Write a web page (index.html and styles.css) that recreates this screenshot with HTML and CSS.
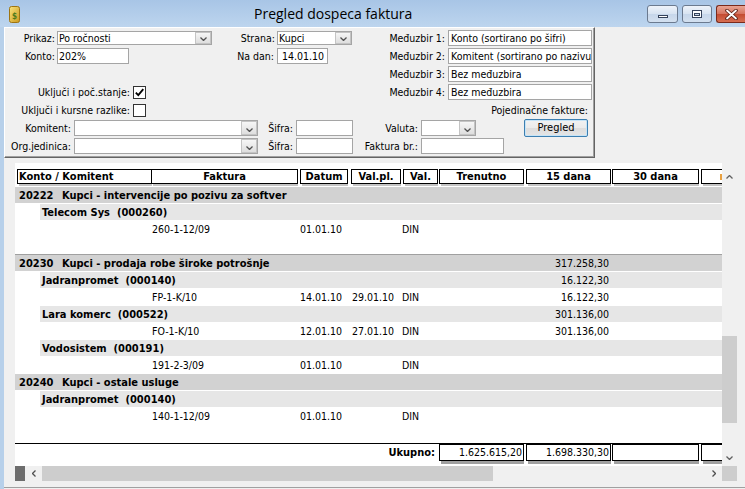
FILE: index.html
```html
<!DOCTYPE html>
<html lang="sr">
<head>
<meta charset="utf-8">
<title>Pregled dospeca faktura</title>
<link rel="stylesheet" href="styles.css">
</head>
<body>
<div class="window">
  <header class="titlebar">
    <svg class="app-icon" width="11" height="17" viewBox="0 0 11 17">
      <defs>
        <linearGradient id="gold" x1="0" y1="0" x2="1" y2="1">
          <stop offset="0" stop-color="#fbe57e"/>
          <stop offset="1" stop-color="#c9981e"/>
        </linearGradient>
      </defs>
      <rect x="0.5" y="0.5" width="10" height="16" rx="2" fill="url(#gold)" stroke="#9e7512"/>
      <text x="5.5" y="13" font-size="8" font-family="DejaVu Sans" font-weight="bold" fill="#4e7c1c" text-anchor="middle">$</text>
    </svg>
    <div class="title">Pregled dospeca faktura</div>
    <div class="caption">
      <div class="cbtn cbtn-min">
        <svg width="12" height="5" viewBox="0 0 12 5"><rect x="1.5" y="1.5" width="9" height="2" fill="#fff" stroke="#34425a"/></svg>
      </div>
      <div class="cbtn cbtn-max">
        <svg width="12" height="10" viewBox="0 0 12 10"><rect x="1.5" y="1.5" width="9" height="7" fill="#fff" stroke="#34425a"/><rect x="3.5" y="4.5" width="5" height="2" fill="#c9d8ea" stroke="#34425a"/></svg>
      </div>
      <div class="cbtn cbtn-close">
        <svg width="13" height="11" viewBox="0 0 13 11"><path d="M2 1.5 L11 9.5 M11 1.5 L2 9.5" stroke="#5a2015" stroke-width="3.6" stroke-linecap="round"/><path d="M2 1.5 L11 9.5 M11 1.5 L2 9.5" stroke="#fff" stroke-width="1.8" stroke-linecap="round"/></svg>
      </div>
    </div>
  </header>

  <div class="client">
    <div class="filters">
      <div class="frow first">
        <span class="lbl w50">Prikaz:</span>
        <div class="combo sm ml2 cw155"><span class="val">Po ročnosti</span><span class="drop"><svg width="7" height="4" viewBox="0 0 7 4"><path d="M0.5 0.5 L3.5 3.5 L6.5 0.5" fill="none" stroke="#505050" stroke-width="1.3"/></svg></span></div>
        <span class="lbl w63">Strana:</span>
        <div class="combo sm ml2 cw75"><span class="val">Kupci</span><span class="drop"><svg width="7" height="4" viewBox="0 0 7 4"><path d="M0.5 0.5 L3.5 3.5 L6.5 0.5" fill="none" stroke="#505050" stroke-width="1.3"/></svg></span></div>
        <div class="rgrp"><span class="lbl w93">Međuzbir 1:</span><div class="edit ml3 ew144">Konto (sortirano po šifri)</div></div>
      </div>
      <div class="frow">
        <span class="lbl w50">Konto:</span>
        <div class="edit ml2 ew72">202%</div>
        <span class="lbl w145">Na dan:</span>
        <div class="edit ml3 ew51">14.01.10</div>
        <div class="rgrp"><span class="lbl w93">Međuzbir 2:</span><div class="edit ml3 ew144">Komitent (sortirano po nazivu</div></div>
      </div>
      <div class="frow">
        <div class="rgrp"><span class="lbl w93">Međuzbir 3:</span><div class="edit ml3 ew144">Bez međuzbira</div></div>
      </div>
      <div class="frow">
        <span class="lbl w125">Uključi i poč.stanje:</span>
        <span class="chk"><svg width="11" height="11" viewBox="0 0 11 11"><path d="M1.8 5.6 L4.3 8.2 L9.3 2.2" fill="none" stroke="#000" stroke-width="1.8"/></svg></span>
        <div class="rgrp"><span class="lbl w93">Međuzbir 4:</span><div class="edit ml3 ew144">Bez međuzbira</div></div>
      </div>
      <div class="frow">
        <span class="lbl w125">Uključi i kursne razlike:</span>
        <span class="chk"></span>
        <span class="note">Pojedinačne fakture:</span>
      </div>
      <div class="frow">
        <span class="lbl w66">Komitent:</span>
        <div class="combo ml3 cw184"><span class="val"></span><span class="drop"><svg width="7" height="4" viewBox="0 0 7 4"><path d="M0.5 0.5 L3.5 3.5 L6.5 0.5" fill="none" stroke="#505050" stroke-width="1.3"/></svg></span></div>
        <span class="lbl w35">Šifra:</span>
        <div class="edit ml3 ew57"></div>
        <span class="lbl w65">Valuta:</span>
        <div class="combo ml3 cw55"><span class="val"></span><span class="drop"><svg width="7" height="4" viewBox="0 0 7 4"><path d="M0.5 0.5 L3.5 3.5 L6.5 0.5" fill="none" stroke="#505050" stroke-width="1.3"/></svg></span></div>
        <span class="btn">Pregled</span>
      </div>
      <div class="frow">
        <span class="lbl w66">Org.jedinica:</span>
        <div class="combo ml3 cw184"><span class="val"></span><span class="drop"><svg width="7" height="4" viewBox="0 0 7 4"><path d="M0.5 0.5 L3.5 3.5 L6.5 0.5" fill="none" stroke="#505050" stroke-width="1.3"/></svg></span></div>
        <span class="lbl w35">Šifra:</span>
        <div class="edit ml3 ew57"></div>
        <span class="lbl w65">Faktura br.:</span>
        <div class="edit ml3 ew83"></div>
      </div>
    </div>

    <div class="grid-wrap">
      <div class="tview">
        <div class="thead">
          <div class="hc h1">Konto / Komitent</div>
          <div class="hc h2">Faktura</div>
          <div class="hc h3">Datum</div>
          <div class="hc h4">Val.pl.</div>
          <div class="hc h5">Val.</div>
          <div class="hc h6">Trenutno</div>
          <div class="hc h7">15 dana</div>
          <div class="hc h8">30 dana</div>
          <div class="hc h9"><span class="clip-mark"></span></div>
        </div>
        <div class="tbody">
          <div class="grp"><span class="code">20222</span><span class="name">Kupci - intervencije po pozivu za softver</span><span class="amt"></span></div>
          <div class="sub"><span class="name">Telecom Sys&nbsp; (000260)</span><span class="amt"></span></div>
          <div class="det"><span class="d-fak">260-1-12/09</span><span class="d-dat">01.01.10</span><span class="d-vp"></span><span class="d-val">DIN</span><span class="d-tr"></span><span class="d-15"></span></div>
          <div class="blank"></div>
          <div class="grp sep"><span class="code">20230</span><span class="name">Kupci - prodaja robe široke potrošnje</span><span class="amt">317.258,30</span></div>
          <div class="sub"><span class="name">Jadranpromet&nbsp; (000140)</span><span class="amt">16.122,30</span></div>
          <div class="det"><span class="d-fak">FP-1-K/10</span><span class="d-dat">14.01.10</span><span class="d-vp">29.01.10</span><span class="d-val">DIN</span><span class="d-tr"></span><span class="d-15">16.122,30</span></div>
          <div class="sub"><span class="name">Lara komerc&nbsp; (000522)</span><span class="amt">301.136,00</span></div>
          <div class="det"><span class="d-fak">FO-1-K/10</span><span class="d-dat">12.01.10</span><span class="d-vp">27.01.10</span><span class="d-val">DIN</span><span class="d-tr"></span><span class="d-15">301.136,00</span></div>
          <div class="sub"><span class="name">Vodosistem&nbsp; (000191)</span><span class="amt"></span></div>
          <div class="det"><span class="d-fak">191-2-3/09</span><span class="d-dat">01.01.10</span><span class="d-vp"></span><span class="d-val">DIN</span><span class="d-tr"></span><span class="d-15"></span></div>
          <div class="grp"><span class="code">20240</span><span class="name">Kupci - ostale usluge</span><span class="amt"></span></div>
          <div class="sub"><span class="name">Jadranpromet&nbsp; (000140)</span><span class="amt"></span></div>
          <div class="det"><span class="d-fak">140-1-12/09</span><span class="d-dat">01.01.10</span><span class="d-vp"></span><span class="d-val">DIN</span><span class="d-tr"></span><span class="d-15"></span></div>
        </div>
        <div class="tfoot">
          <span class="ukupno">Ukupno:</span>
          <div class="fc f1">1.625.615,20</div>
          <div class="fc f2">1.698.330,30</div>
          <div class="fc f3"></div>
          <div class="fc f4"></div>
        </div>
      </div>

      <div class="vscroll">
        <div class="sb-btn up"><svg width="7" height="4" viewBox="0 0 7 4"><path d="M0.5 3.5 L3.5 0.5 L6.5 3.5" fill="none" stroke="#606060" stroke-width="1.3"/></svg></div>
        <div class="vtrack"><div class="vthumb"></div></div>
        <div class="sb-btn down"><svg width="7" height="4" viewBox="0 0 7 4"><path d="M0.5 0.5 L3.5 3.5 L6.5 0.5" fill="none" stroke="#606060" stroke-width="1.3"/></svg></div>
      </div>

      <div class="hscroll">
        <div class="hdark"></div>
        <div class="hbtn"><svg width="4" height="7" viewBox="0 0 4 7"><path d="M3.5 0.5 L0.5 3.5 L3.5 6.5" fill="none" stroke="#505050" stroke-width="1.3"/></svg></div>
        <div class="hthumb"></div>
        <div class="htrack"></div>
        <div class="hbtn"><svg width="4" height="7" viewBox="0 0 4 7"><path d="M0.5 0.5 L3.5 3.5 L0.5 6.5" fill="none" stroke="#505050" stroke-width="1.3"/></svg></div>
      </div>

      <div class="corner"></div>
    </div>

    <div class="bottom-edge"></div>
  </div>
</div>
</body>
</html>
```

FILE: styles.css
```css
* { box-sizing: border-box; }
html, body { margin: 0; padding: 0; }
body {
  width: 745px;
  height: 489px;
  overflow: hidden;
  background: #f0f0f0;
  font-family: "DejaVu Sans Condensed", "DejaVu Sans", "Liberation Sans", sans-serif;
  font-stretch: condensed;
  font-size: 10.5px;
  color: #000;
}
.window { width: 745px; height: 489px; display: flex; flex-direction: column; }

/* Title bar */
.titlebar {
  flex: none;
  height: 27px;
  display: flex;
  align-items: flex-start;
  overflow: hidden;
  background: linear-gradient(#a8c5e6, #bdd5ee);
}
.app-icon { flex: none; margin: 6px 0 0 9px; }
.title {
  flex: none;
  margin: 4px 0 0 234px;
  font-family: "Open Sans", "Noto Sans", sans-serif;
  font-stretch: normal;
  font-size: 14px;
  line-height: 19px;
}
.caption { flex: none; margin-left: auto; margin-top: 5px; display: flex; gap: 4px; }
.cbtn {
  height: 18px;
  border: 1px solid #6b7a8f;
  border-radius: 3px;
  background: linear-gradient(#eef3fa, #d7e3f1 50%, #c6d6ea 51%, #d3e0ef);
  display: flex;
  align-items: center;
  justify-content: center;
}
.cbtn-min { width: 31px; }
.cbtn-min svg { margin-top: 5px; }
.cbtn-max { width: 30px; }
.cbtn-close {
  width: 29px;
  border-right: none;
  border-radius: 3px 0 0 3px;
  border-color: #7a2a1c;
  background: linear-gradient(#e8a595, #d5725d 50%, #c44b31 51%, #d66e52);
}

/* Client */
.client { flex: 1; display: flex; flex-direction: column; border-left: 4px solid #b7d0ea; }

.filters {
  flex: none;
  width: 591px;
  height: 131px;
  border: 1px solid;
  border-color: #ffffff #646464 #646464 #ffffff;
  box-shadow: inset -1px -1px 0 #a0a0a0;
  padding: 1px 2px 0 0;
  display: flex;
  flex-direction: column;
  gap: 2px;
}
.frow { flex: none; display: flex; align-items: center; height: 16px; }
.frow.first { height: 17px; }
.lbl { flex: none; text-align: right; white-space: nowrap; line-height: 16px; }
.w35 { width: 35px; }
.w50 { width: 50px; }
.w63 { width: 63px; }
.w65 { width: 65px; }
.w66 { width: 66px; }
.w93 { width: 93px; }
.w125 { width: 125px; }
.w145 { width: 145px; }
.ml2 { margin-left: 2px; }
.ml3 { margin-left: 3px; }

.rgrp { margin-left: auto; display: flex; align-items: center; }

.edit {
  flex: none;
  height: 16px;
  border: 1px solid #a5a5a5;
  background: #fff;
  padding-left: 2px;
  line-height: 14px;
  white-space: nowrap;
  overflow: hidden;
}
.ew51 { width: 51px; padding-left: 4px; }
.ew57 { width: 57px; }
.ew72 { width: 72px; padding-left: 1px; }
.ew83 { width: 83px; }
.ew144 { width: 144px; }

.combo {
  flex: none;
  display: flex;
  height: 16px;
  border: 1px solid #a5a5a5;
  background: #fff;
}
.combo.sm { height: 14px; }
.combo .val { flex: 1; padding-left: 1px; line-height: 14px; white-space: nowrap; overflow: hidden; }
.combo.sm .val { line-height: 12px; }
.combo .drop {
  flex: none;
  width: 16px;
  border: 1px solid #c4c4c4;
  background: linear-gradient(#f6f6f6, #dedede);
  display: flex;
  align-items: center;
  justify-content: center;
  padding-top: 3px;
}
.cw55 { width: 55px; }
.cw75 { width: 75px; }
.cw155 { width: 155px; }
.cw184 { width: 184px; }

.chk {
  flex: none;
  width: 13px;
  height: 13px;
  margin-left: 3px;
  border: 1px solid #333;
  background: #fff;
  display: flex;
  align-items: center;
  justify-content: center;
}
.note { margin-left: auto; padding-right: 4px; white-space: nowrap; }
.btn {
  flex: none;
  width: 64px;
  height: 18px;
  margin-left: auto;
  margin-right: 4px;
  border: 1px solid #3c7fb1;
  border-radius: 2px;
  background: linear-gradient(#f2f2f2, #ebebeb 50%, #dddddd 51%, #e5e5e5);
  box-shadow: inset 0 0 0 1px #c6e4f7;
  text-align: center;
  line-height: 16px;
  font-size: 11px;
}

/* Grid area */
.grid-wrap {
  flex: none;
  margin: 5px 0 0 11px;
  width: 722px;
  height: 318px;
  display: grid;
  grid-template-columns: 707px 15px;
  grid-template-rows: 303px 15px;
}
.tview { background: #fff; overflow: hidden; display: flex; flex-direction: column; }
.thead { flex: none; display: flex; height: 15px; margin: 6px 0 3px 2px; }
.hc {
  flex: none;
  height: 15px;
  border: 1px solid #000;
  background: #fff;
  font-size: 11px;
  font-weight: bold;
  text-align: center;
  line-height: 13px;
  white-space: nowrap;
  overflow: hidden;
  box-shadow: 1px 3px 0 -1px #c4c4c4;
}
.h1 { width: 135px; text-align: left; padding-left: 1px; }
.h2 { width: 147px; margin-left: -1px; }
.h3 { width: 48px; margin-left: 2px; }
.h4 { width: 50px; margin-left: 3px; }
.h5 { width: 35px; margin-left: 2px; }
.h6 { width: 85px; margin-left: 1px; }
.h7 { width: 85px; margin-left: 2px; }
.h8 { width: 87px; margin-left: 1px; }
.h9 { width: 60px; margin-left: 2px; display: flex; align-items: center; padding-left: 18px; }
.clip-mark { display: block; width: 2px; height: 6px; background: #e8a040; }

.tbody { flex: 1; overflow: hidden; }
.grp {
  height: 17px;
  display: flex;
  align-items: center;
  background: #d2d2d2;
  border-bottom: 1px solid #fff;
  font-size: 11px;
  font-weight: bold;
  padding-left: 4px;
  white-space: nowrap;
}
.grp.sep { height: 18px; border-top: 1px solid #a0a0a0; }
.code { flex: none; width: 43px; }
.name { flex: 1; white-space: nowrap; }
.amt { flex: none; width: 85px; margin-right: 111px; padding-right: 2px; text-align: right; font-weight: normal; font-size: 10.5px; }
.sub {
  height: 16px;
  margin-left: 25px;
  display: flex;
  align-items: center;
  background: #e6e6e6;
  font-size: 11px;
  font-weight: bold;
  padding-left: 2px;
  white-space: nowrap;
}
.det { height: 18px; display: flex; align-items: center; padding-left: 137px; white-space: nowrap; }
.det span { flex: none; }
.d-fak { width: 148px; }
.d-dat { width: 52px; }
.d-vp { width: 50px; }
.d-val { width: 37px; }
.d-tr { width: 87px; }
.d-15 { width: 85px; text-align: right; padding-right: 2px; }
.blank { height: 16px; }

.tfoot { flex: none; height: 23px; border-top: 1px solid #000; display: flex; align-items: flex-start; }
.ukupno { flex: none; width: 421px; padding-right: 1px; text-align: right; font-size: 11px; font-weight: bold; line-height: 17px; }
.fc {
  flex: none;
  height: 17px;
  border: 1px solid #000;
  background: #fff;
  text-align: right;
  padding-right: 1px;
  line-height: 15px;
  box-shadow: 1px 4px 0 -1px #a0a0a0;
}
.f1 { width: 85px; margin-left: 3px; }
.f2 { width: 85px; margin-left: 2px; }
.f3 { width: 87px; margin-left: 1px; }
.f4 { width: 60px; margin-left: 2px; }

/* Scrollbars */
.vscroll { background: #f0f0f0; display: flex; flex-direction: column; }
.sb-btn { flex: none; height: 17px; display: flex; align-items: center; justify-content: center; }
.sb-btn.up { height: 22px; padding-top: 6px; }
.vtrack { flex: 1; }
.vthumb { margin-top: 151px; height: 87px; background: #cdcdcd; }

.hscroll { display: flex; background: #f0f0f0; }
.hdark { flex: none; width: 10px; background: #6d6d6d; }
.hbtn { flex: none; width: 17px; display: flex; align-items: center; justify-content: center; }
.hthumb { flex: none; width: 451px; background: #cdcdcd; }
.htrack { flex: 1; }
.corner { background: #cdcdcd; }

.bottom-edge { margin-top: auto; height: 2px; border-top: 1px solid #a0a0a0; }
```
